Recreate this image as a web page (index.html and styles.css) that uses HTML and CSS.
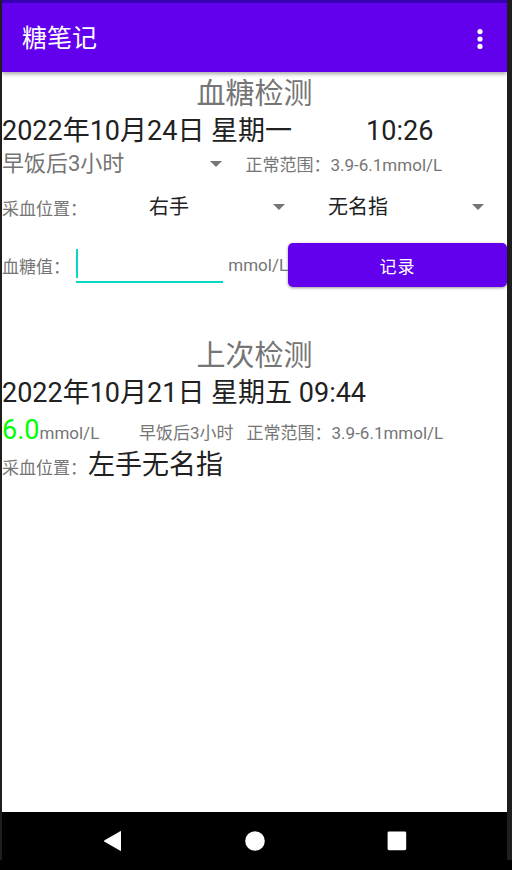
FILE: index.html
```html
<!DOCTYPE html>
<html lang="zh-CN">
<head>
<meta charset="utf-8">
<meta name="viewport" content="width=device-width, initial-scale=1">
<title>糖笔记</title>
<link rel="stylesheet" href="styles.css">
</head>
<body>
<div class="screen">
  <header class="app-bar">
    <h1 class="app-title">糖笔记</h1>
    <button class="icon-button" type="button" aria-label="更多选项">
      <svg width="6" height="20" viewBox="0 0 6 20" fill="#fff"><circle cx="3" cy="2.6" r="2.6"/><circle cx="3" cy="10" r="2.6"/><circle cx="3" cy="17.4" r="2.6"/></svg>
    </button>
  </header>
  <main class="content">
    <form class="section">
      <h2 class="heading">血糖检测</h2>
      <div class="row row-date now"><span>2022年10月24日 星期一</span><span>10:26</span></div>
      <div class="row row-period">
        <div class="spinner spinner-period">
          <select aria-label="检测时段"><option>早饭后3小时</option></select>
          <svg class="arrow" width="12" height="6" viewBox="0 0 12 6"><path d="M0 0h12L6 6z"/></svg>
        </div>
        <span class="note">正常范围：3.9-6.1mmol/L</span>
      </div>
      <div class="row row-site">
        <label class="note" for="hand">采血位置：</label>
        <div class="spinner spinner-hand">
          <select id="hand"><option>右手</option></select>
          <svg class="arrow" width="12" height="6" viewBox="0 0 12 6"><path d="M0 0h12L6 6z"/></svg>
        </div>
        <div class="spinner">
          <select aria-label="手指"><option>无名指</option></select>
          <svg class="arrow" width="12" height="6" viewBox="0 0 12 6"><path d="M0 0h12L6 6z"/></svg>
        </div>
      </div>
      <div class="row row-value">
        <label class="note" for="glucose">血糖值：</label>
        <input class="value-input" id="glucose" type="text" inputmode="decimal">
        <span class="note">mmol/L</span>
        <button class="record" type="button">记录</button>
      </div>
    </form>
    <section class="section">
      <h2 class="heading">上次检测</h2>
      <div class="row row-date">2022年10月21日 星期五 09:44</div>
      <div class="row row-result">
        <div class="reading"><strong class="level">6.0</strong><span class="note">mmol/L</span></div>
        <span class="note">早饭后3小时</span>
        <span class="note">正常范围：3.9-6.1mmol/L</span>
      </div>
      <div class="row row-last-site"><span class="note">采血位置：</span><span class="site">左手无名指</span></div>
    </section>
  </main>
  <nav class="nav-bar" aria-label="系统导航">
    <button class="icon-button" type="button" aria-label="返回"><svg width="20" height="20" viewBox="0 0 20 20" fill="#fff"><path d="M18 0.6v18.8q0 .8-.8.4L1.6 10.8q-1.2-.8 0-1.6L17.2.2q.8-.4.8.4z"/></svg></button>
    <button class="icon-button" type="button" aria-label="主屏幕"><svg width="20" height="20" viewBox="0 0 20 20" fill="#fff"><circle cx="10" cy="10" r="9.8"/></svg></button>
    <button class="icon-button" type="button" aria-label="最近任务"><svg width="20" height="20" viewBox="0 0 20 20" fill="#fff"><rect x="0.6" y="0.6" width="18.6" height="18.6" rx="1.4"/></svg></button>
  </nav>
</div>
</body>
</html>
```
FILE: styles.css
```css
* { box-sizing: border-box; }

body {
  margin: 0;
  padding-bottom: 10px;
  min-height: 100vh;
  display: flex;
  flex-direction: column;
  background: #000;
  color: #212121;
  font-family: Roboto, "Noto Sans CJK SC", sans-serif;
}

button, input, select { font: inherit; color: inherit; }

.screen {
  flex: 1;
  display: flex;
  flex-direction: column;
  border-left: 2px solid #1e1e1e;
  border-right: 5px solid #1e1e1c;
  background: #fff;
}

.content { flex: 1; }

.app-bar {
  display: flex;
  align-items: center;
  justify-content: space-between;
  height: 72px;
  padding: 2px 16px 0 20px;
  background: #6200ee;
  border-top: 3px solid #3700b3;
  box-shadow: 0 2px 4px rgba(0, 0, 0, 0.35);
  clip-path: inset(0 0 -8px 0);
  color: #fff;
}

.app-title { margin: 0; font-size: 25px; line-height: 32px; font-weight: 400; }

.icon-button {
  display: flex;
  align-items: center;
  justify-content: center;
  padding: 0;
  border: 0;
  background: none;
}

.app-bar .icon-button { width: 22px; height: 40px; }

.section { padding-top: 2px; margin: 0 0 40px; }

.heading {
  margin: 0;
  text-align: center;
  font-size: 29px;
  line-height: 40px;
  font-weight: 400;
  color: #757575;
}

.row { display: flex; white-space: nowrap; }

.row-date { font-size: 27px; line-height: 35px; }

.now { gap: 74px; }

.note { font-size: 17px; color: #757575; }

.row-period, .row-site, .row-value { align-items: center; }

.row-period { height: 29px; }

.row-site { height: 58px; }

.row-site > .note { flex: 147; }

.spinner { position: relative; flex: 179; }

.spinner-hand { flex: 159; margin-right: 20px; }

.spinner-period { flex: 243; }

.row-period > .note { flex: 261; }

.spinner select {
  display: block;
  width: 100%;
  padding: 0;
  border: 0;
  appearance: none;
  background: none;
  font-size: 20px;
}

.spinner-period select { font-size: 22px; color: #757575; }

.arrow {
  position: absolute;
  right: 23px;
  top: 50%;
  margin-top: -3px;
  fill: #757575;
  pointer-events: none;
}

.row-value { height: 58px; }

.value-input {
  flex: 7 1 0;
  min-width: 0;
  height: 36px;
  margin: 0 5px 0 6px;
  padding: 0 4px;
  border: 0;
  border-bottom: 2px solid #03dac5;
  outline: 0;
  background: linear-gradient(#03dac5, #03dac5) 0 2px / 2px 29px no-repeat;
}

.record {
  flex: 11 1 0;
  height: 44px;
  padding: 0;
  border: 0;
  border-radius: 5px;
  background: #6200ee;
  color: #fff;
  font-size: 17px;
  letter-spacing: 1px;
  box-shadow: 0 1px 3px rgba(0, 0, 0, 0.4);
}

.row-result { align-items: baseline; height: 37px; line-height: 38px; }

.row-result > .note { margin-right: 13px; }

.reading { width: 137px; }

.level { font-size: 27px; font-weight: 400; color: #0f0; }

.row-last-site { align-items: baseline; gap: 1px; line-height: 35px; }

.site { font-size: 27px; }

.nav-bar {
  display: flex;
  justify-content: center;
  gap: 102px;
  height: 48px;
  padding-top: 10px;
  background: #000;
}

.nav-bar .icon-button { width: 40px; height: 38px; }
```
